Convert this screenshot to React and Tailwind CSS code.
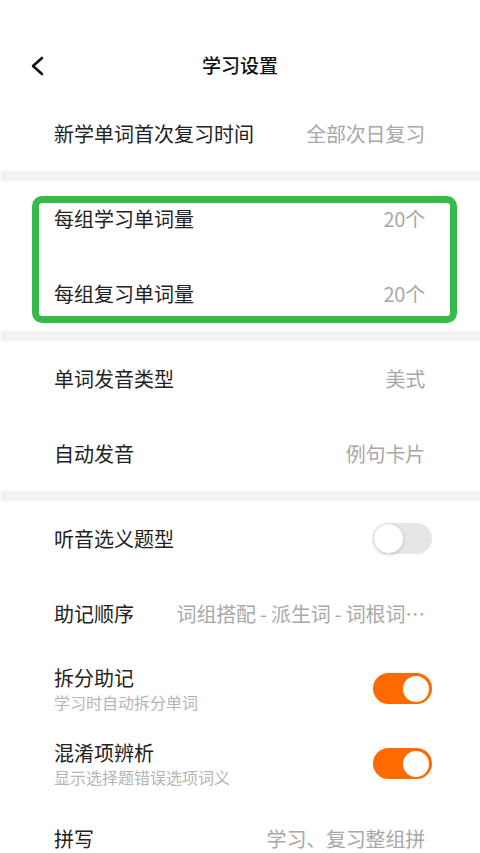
import React from 'react';

const Toggle = ({ on }) => (
  on ? (
    <div className="flex h-[31px] w-[59px] items-center justify-end rounded-full bg-[#ff6a00] pr-[3px]">
      <div className="h-[26px] w-[26px] rounded-full bg-white" />
    </div>
  ) : (
    <div className="flex h-[31px] w-[59px] items-center rounded-full bg-[#e6e6e6]">
      <div className="h-[31px] w-[31px] rounded-full border border-[#dcdcdc] bg-white shadow-[0_1px_3px_rgba(0,0,0,0.15)]" />
    </div>
  )
);

const Row = ({ label, value, sub, toggle }) => (
  <div className="flex h-[75px] items-center justify-between pl-[54px] pr-[55px]">
    <div className="shrink-0">
      <div className="text-[20px] leading-[26px] text-[#222]">{label}</div>
      {sub && <div className="text-[16px] leading-[22px] text-[#b5b5b5]">{sub}</div>}
    </div>
    {value && <div className="ml-[40px] whitespace-nowrap text-[20px] tracking-[-0.2px] text-[#a8a8a8]">{value}</div>}
    {toggle !== undefined && <div className="-mr-[7px]"><Toggle on={toggle} /></div>}
  </div>
);

const Band = () => <div className="ml-[1px] h-[10px] bg-[#f3f3f3]" />;

export default function App() {
  return (
    <div className="h-[853px] w-[480px] overflow-hidden bg-white font-['Noto_Sans_CJK_SC','Noto_Sans',sans-serif]">
      <div className="relative flex h-[96px] items-center justify-center pt-[34px]">
        <svg className="absolute left-[28px] top-[55px]" width="18" height="22" viewBox="0 0 18 22" fill="none">
          <polyline points="14,3 5,11 14,19" stroke="#111" strokeWidth="2.6" strokeLinecap="round" strokeLinejoin="round" />
        </svg>
        <div className="text-[19px] font-medium text-[#111]">学习设置</div>
      </div>
      <Row label="新学单词首次复习时间" value="全部次日复习" />
      <Band />
      <div className="relative">
        <Row label="每组学习单词量" value="20个" />
        <Row label="每组复习单词量" value="20个" />
        <div className="absolute left-[32px] top-[15px] h-[127px] w-[425px] rounded-[10px] border-[7px] border-[#35bb4a]" />
      </div>
      <Band />
      <Row label="单词发音类型" value="美式" />
      <Row label="自动发音" value="例句卡片" />
      <Band />
      <Row label="听音选义题型" toggle={false} />
      <Row label="助记顺序" value="词组搭配 - 派生词 - 词根词…" />
      <Row label="拆分助记" sub="学习时自动拆分单词" toggle={true} />
      <Row label="混淆项辨析" sub="显示选择题错误选项词义" toggle={true} />
      <Row label="拼写" value="学习、复习整组拼" />
    </div>
  );
}
